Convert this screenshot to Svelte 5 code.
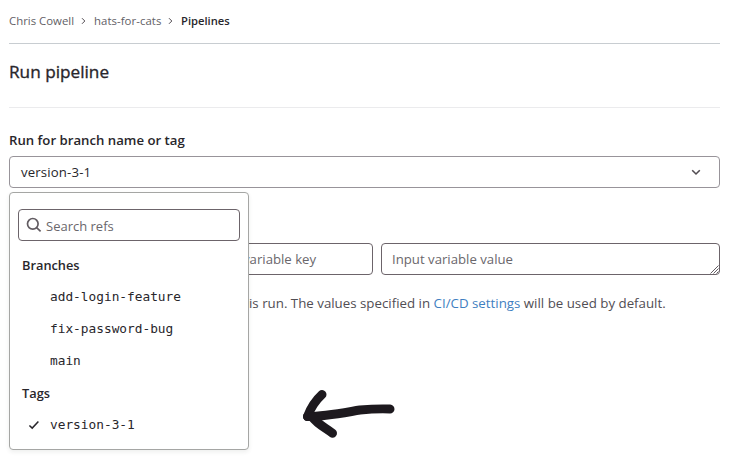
<script>
  const groups = [
    { title: 'Branches', refs: ['add-login-feature', 'fix-password-bug', 'main'] },
    { title: 'Tags', refs: ['version-3-1'] }
  ];
  const selected = 'version-3-1';
</script>

<div class="page">
  <nav class="crumbs">
    <span class="c1">Chris Cowell</span>
    <svg class="sep" width="5" height="8" viewBox="0 0 5 8"><path d="M1 1.2 3.8 4 1 6.8" /></svg>
    <span class="c2">hats-for-cats</span>
    <svg class="sep" width="5" height="8" viewBox="0 0 5 8"><path d="M1 1.2 3.8 4 1 6.8" /></svg>
    <span class="c3">Pipelines</span>
  </nav>
  <h1><span>Run pipeline</span></h1>
  <div class="label"><span>Run for branch name or tag</span></div>
  <div class="select">
    <span class="value">{selected}</span>
    <svg width="10" height="7" viewBox="0 0 10 7"><path d="M1.2 1.3 5 5 8.8 1.3" /></svg>

    <div class="menu">
      <div class="search">
        <svg width="16" height="16" viewBox="0 0 16 16"><circle cx="6.8" cy="6.8" r="5.3" /><path d="M10.6 10.6 14.6 14.4" /></svg>
        <span>Search refs</span>
      </div>
      {#each groups as group}
        <div class="group">{group.title}</div>
        {#each group.refs as ref}
          <div class="ref">
            <span class="tick">
              {#if ref === selected}
                <svg width="12" height="10" viewBox="0 0 12 10"><path d="M1.4 5.5 4.2 8.1 10.4 1.6" /></svg>
              {/if}
            </span>
            <span>{ref}</span>
          </div>
        {/each}
      {/each}
    </div>
  </div>

  <div class="fields">
    <div class="field key"><span>variable key</span></div>
    <div class="field val">
      <span>Input variable value</span>
      <svg class="grip" width="9" height="9" viewBox="0 0 9 9"><path d="M0.5 8.5 8.5 0.5M3.5 8.5 8.5 3.5M6.5 8.5 8.5 6.5" /></svg>
    </div>
  </div>
  <div class="help"><span>is run. The values specified in <a>CI/CD settings</a> will be used by default.</span></div>

  <svg class="arrow" width="100" height="54" viewBox="0 0 100 54">
    <path d="M22 14.5C16 20 11 27 7.5 36.5" />
    <path d="M7.5 36.5C25 36.5 42 33 60 30Q76 28.5 90 29" />
    <path d="M12 37C18 45 25 47.5 32.5 53.5" transform="translate(0 -0.2)" />
  </svg>
</div>

<style>
  :global(body) { background: #fff; }
  .page {
    position: relative;
    box-sizing: border-box;
    width: 733px;
    height: 459px;
    padding: 0 13px 0 9px;
    overflow: hidden;
    background: #fff;
    color: #28262b;
    font: 13.2px/20px "Open Sans", "Noto Sans", sans-serif;
    white-space: nowrap;
  }
  svg { display: block; flex: none; fill: none; stroke: #514b51; }
  .crumbs {
    display: flex;
    align-items: center;
    box-sizing: border-box;
    height: 44px;
    padding-bottom: 2px;
    border-bottom: 1px solid #c8cdd1;
    font-size: 11.4px;
    color: #626066;
  }
  .c1 { width: 72px; }
  .c2 { width: 74px; letter-spacing: 0.05px; }
  .c3 { color: #28262b; font-weight: 600; font-size: 11.2px; }
  .sep { margin-right: 8px; stroke-width: 1; }
  h1 {
    display: flex;
    align-items: center;
    box-sizing: border-box;
    height: 64px;
    margin: 0;
    padding-bottom: 7px;
    border-bottom: 1px solid #ebebed;
    font-size: 17.2px;
    font-weight: 400;
    -webkit-text-stroke: 0.35px #28262b;
  }
  .label {
    display: flex;
    align-items: center;
    height: 20px;
    padding: 22px 0 6px;
    font-weight: 600;
  }
  .select {
    position: relative;
    display: flex;
    align-items: center;
    justify-content: space-between;
    box-sizing: border-box;
    height: 32px;
    padding: 0 18px 0 11px;
    border: 1px solid #98949a;
    border-radius: 4px;
  }
  .value { letter-spacing: 0.15px; }
  .select > svg { stroke-width: 1.6; }
  .menu {
    position: absolute;
    z-index: 2;
    top: 35px;
    left: -1px;
    box-sizing: border-box;
    width: 240px;
    height: 258px;
    padding: 16px 8px;
    border: 1px solid #a5a6a4;
    border-radius: 4px;
    background: #fff;
    box-shadow: 0 2px 4px #28322814;
  }
  .search {
    display: flex;
    align-items: center;
    gap: 4px;
    box-sizing: border-box;
    height: 32px;
    margin-bottom: 8px;
    padding-left: 7px;
    border: 1px solid #6c646a;
    border-radius: 4px;
    color: #6a676c;
  }
  .search span { padding-top: 2px; font-size: 13px; }
  .search svg { stroke-width: 1.7; stroke: #625c62; }
  .group { height: 32px; padding-left: 4px; line-height: 32px; font-weight: 600; font-size: 12.8px; }
  .ref {
    display: flex;
    align-items: center;
    height: 32px;
    padding-left: 10px;
    font: 12.8px/20px "DejaVu Sans Mono", monospace;
  }
  .tick { width: 22px; }
  .tick svg { stroke: #28262b; stroke-width: 1.5; }
  .fields { display: flex; gap: 8px; margin-top: 55px; }
  .field {
    position: relative;
    display: flex;
    align-items: center;
    box-sizing: border-box;
    height: 32px;
    border: 1px solid #6c646a;
    border-radius: 4px;
    color: #6a676c;
  }
  .key { width: 364px; padding-left: 233px; }
  .val { width: 339px; padding-left: 10px; }
  .grip { position: absolute; right: 0; bottom: 0; stroke-width: 0.9; }
  .help { margin-top: 18px; padding-left: 240px; color: #514e54; font-size: 13.3px; }
  a { color: #3f7fc1; }
  .arrow { position: absolute; left: 300px; top: 380px; overflow: visible; stroke: #1d191e; stroke-width: 9; stroke-linecap: round; stroke-linejoin: round; }
</style>
